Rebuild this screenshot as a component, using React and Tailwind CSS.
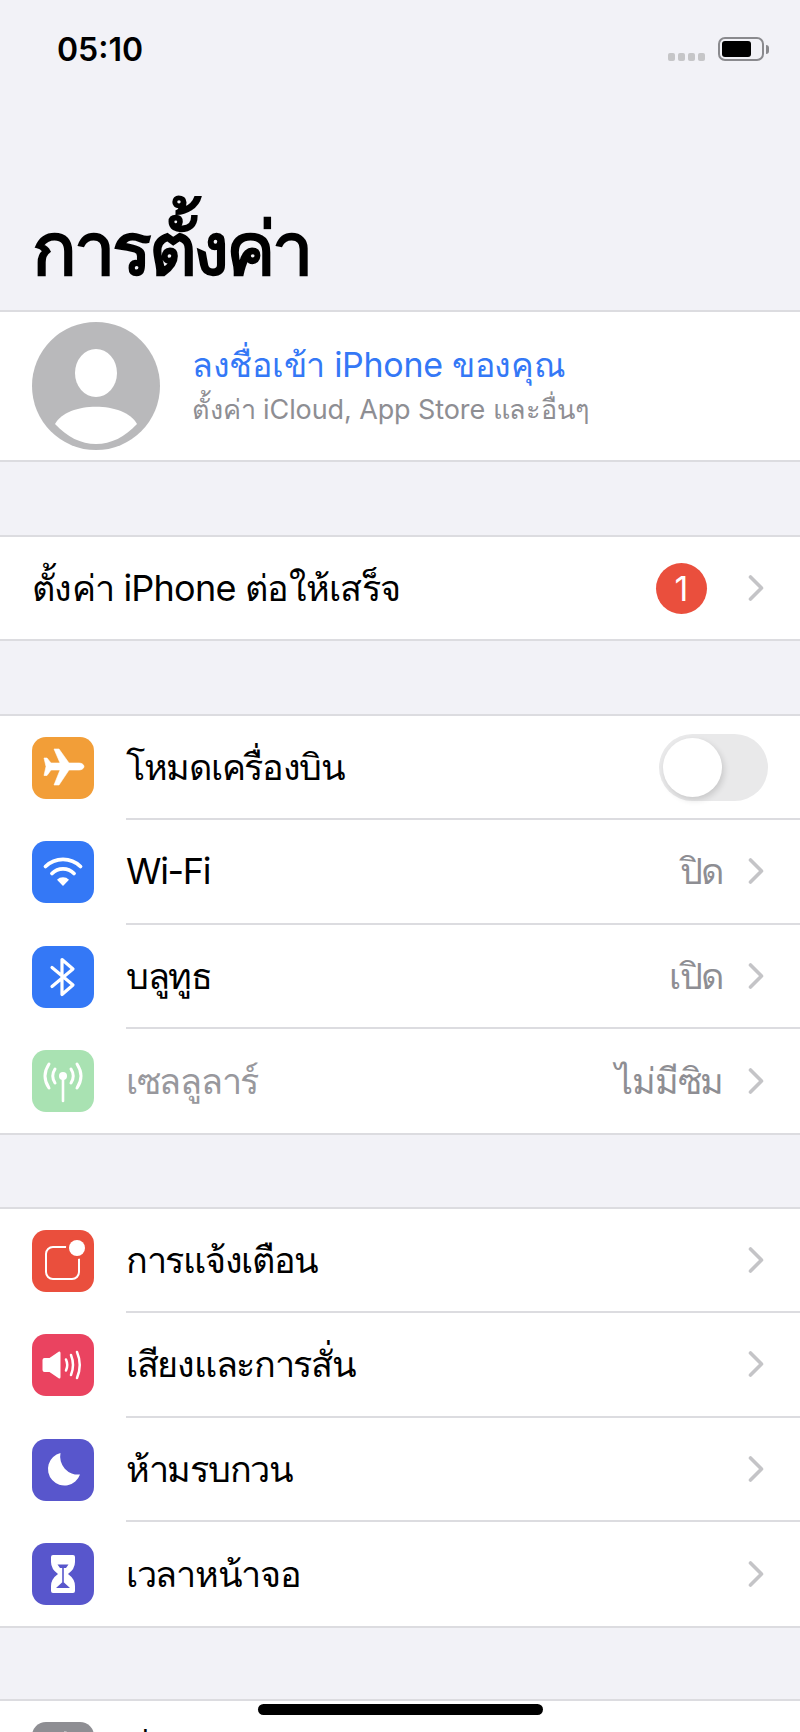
import React from 'react'

function Chevron() {
  return (
    <svg width="16" height="26" viewBox="0 0 16 26" className="shrink-0">
      <path d="M2.5 2 L13.5 13 L2.5 24" fill="none" stroke="#c4c4c7" strokeWidth="3.6" strokeLinecap="round" strokeLinejoin="round" />
    </svg>
  )
}

function Glyph({ children }) {
  return <svg width="62" height="62" viewBox="0 0 62 62">{children}</svg>
}

const icons = {
  plane: (
    <Glyph>
      <path fill="#fff" stroke="#fff" strokeWidth="0.6" strokeLinejoin="round" d="M52 29.500c0 2-2.500 3.500-5 3.500H37L27 48h-5l6-15h-9l-4 5.500h-3l2-9-2-8.500h3l4 5h9l-6-14h5l10 14h10c2.500 0 5 1.500 5 3.500z" />
    </Glyph>
  ),
  wifi: (
    <Glyph>
      <path d="M13.500 25.500A25 25 0 0 1 48.500 25.500" fill="none" stroke="#fff" strokeWidth="3.800" strokeLinecap="round" />
      <path d="M20 32.500A15.500 15.500 0 0 1 42 32.500" fill="none" stroke="#fff" strokeWidth="3.800" strokeLinecap="round" />
      <path d="M31 45L25 38.800A8.500 8.500 0 0 1 37 38.800Z" fill="#fff" />
    </Glyph>
  ),
  bluetooth: (
    <Glyph>
      <path d="M20 21.500L41 39L30 48.500V13.500L41 23L20 40.500" fill="none" stroke="#fff" strokeWidth="3.200" strokeLinecap="round" strokeLinejoin="round" />
    </Glyph>
  ),
  cellular: (
    <Glyph>
      <circle cx="31" cy="26" r="4" fill="#fff" />
      <path d="M31 28V51" stroke="#fff" strokeWidth="2.600" strokeLinecap="round" />
      <path d="M17 14Q9 26 17 38M45 14Q53 26 45 38M23 19Q18.500 26 23 33M39 19Q43.500 26 39 33" fill="none" stroke="#fff" strokeWidth="3" strokeLinecap="round" />
    </Glyph>
  ),
  notify: (
    <Glyph>
      <rect x="14" y="17" width="33" height="32" rx="7" fill="none" stroke="#fff" strokeWidth="2" />
      <circle cx="45" cy="18" r="11" fill="#ea4f3d" />
      <circle cx="45" cy="18" r="8" fill="#fff" />
    </Glyph>
  ),
  sound: (
    <Glyph>
      <path fill="#fff" d="M10.500 26q0-2 2-2h5L27 17.500q1.500-.5 1.500 1.500v24q0 2-1.500 1.500L17.500 38h-5q-2 0-2-2z" />
      <path d="M34 25.500Q36.500 31 34 36.500M39 21Q43 31 39 41M45 18Q50.500 31 45 44" fill="none" stroke="#fff" strokeWidth="2.500" strokeLinecap="round" />
    </Glyph>
  ),
  moon: (
    <Glyph>
      <path fill="#fff" d="M28.500 14A16.500 16.500 0 1 0 48 35.500A18 18 0 0 1 28.500 14Z" />
    </Glyph>
  ),
  hourglass: (
    <Glyph>
      <path fill="#fff" d="M21 12h20q2 0 2 2v5q0 7-7 12 7 5 7 12v5q0 2-2 2H21q-2 0-2-2v-5q0-7 7-12-7-5-7-12v-5q0-2 2-2z" />
      <path fill="#5856cc" d="M25.500 21.500h11l-2.500 3.500h-6zM30.200 25h1.600v15h-1.600zM30 39.500h2l6 5.500H24z" />
    </Glyph>
  ),
  gear: (
    <Glyph>
      <circle cx="31" cy="31" r="19" fill="none" stroke="#fff" strokeWidth="5" strokeDasharray="2.500 5" />
    </Glyph>
  ),
}

function Toggle() {
  return (
    <div className="flex h-[67px] w-[109px] items-center rounded-full bg-[#e9e9ea] pl-[4px]">
      <div className="h-[59px] w-[59px] rounded-full bg-white shadow-[2px_3px_6px_rgba(0,0,0,0.14)]" />
    </div>
  )
}

function SettingRow({ icon, color, label, value, dim, toggle, last }) {
  return (
    <div className="flex h-[104.250px] items-center pl-[32px]">
      <div className={`flex h-[62px] w-[62px] shrink-0 items-center justify-center rounded-[14px] ${color}`}>
        {icons[icon]}
      </div>
      <div className={`ml-[32px] flex h-full min-w-0 flex-1 items-center pr-[36px] tracking-[-1.3px] ${last ? '' : 'border-b-2 border-[#dcdce0]'}`}>
        <span className={`flex-1 text-[36px] ${dim ? 'text-[#98989d]' : 'text-black'}`}>{label}</span>
        {toggle && <div className="-mr-[4px]"><Toggle /></div>}
        {value && <span className="mr-[25px] text-[36px] text-[#8e8e93]">{value}</span>}
        {!toggle && <Chevron />}
      </div>
    </div>
  )
}

function Section({ children, className }) {
  return <div className={`border-y-2 border-[#dcdce0] bg-white ${className}`}>{children}</div>
}

export default function App() {
  return (
    <div className="relative h-[1732px] w-[800px] overflow-hidden bg-[#f2f2f7] font-['Inter','Noto_Sans',sans-serif]">
      {/* status bar + big title */}
      <div className="flex h-[310px] flex-col justify-between">
        <div className="flex items-start justify-between pl-[57px] pr-[31px] pt-[30px]">
          <span className="text-[32px] font-semibold leading-[40px] text-black">05:10</span>
          <div className="flex items-center pt-[7px]">
            <div className="mr-[13px] mt-[16px] flex gap-[3px]">
              <div className="h-[8px] w-[7px] rounded-[2px] bg-[#c6c6c8]" />
              <div className="h-[8px] w-[7px] rounded-[2px] bg-[#c6c6c8]" />
              <div className="h-[8px] w-[7px] rounded-[2px] bg-[#c6c6c8]" />
              <div className="h-[8px] w-[7px] rounded-[2px] bg-[#c6c6c8]" />
            </div>
            <div className="flex h-[24px] w-[46px] items-center rounded-[7px] border-2 border-[#8a8a8e] pl-[2px]">
              <div className="h-[16px] w-[29px] rounded-[3px] bg-black" />
            </div>
            <div className="ml-[2px] h-[9px] w-[3px] rounded-r-full bg-[#8a8a8e]" />
          </div>
        </div>
        <h1 className="pb-[17px] pl-[32px] text-[74px] font-bold leading-[90px] tracking-[-3.5px] text-black">การตั้งค่า</h1>
      </div>

      {/* profile */}
      <Section>
        <div className="flex h-[148px] items-center pl-[32px]">
          <svg width="128" height="128" viewBox="0 0 128 128" className="shrink-0">
            <circle cx="64" cy="64" r="64" fill="#b9b9bb" />
            <ellipse cx="64" cy="51" rx="21" ry="24" fill="#fff" />
            <path d="M23 102C35 79 93 79 105 102C93 115 79 122 64 122C49 122 35 115 23 102Z" fill="#fff" />
          </svg>
          <div className="ml-[32px]">
            <div className="text-[34px] leading-[48px] tracking-[-0.3px] text-[#3478f6]">ลงชื่อเข้า iPhone ของคุณ</div>
            <div className="text-[27px] leading-[42px] tracking-[-0.1px] text-[#8e8e93]">ตั้งค่า iCloud, App Store และอื่นๆ</div>
          </div>
        </div>
      </Section>

      {/* finish setup */}
      <Section className="mt-[73px]">
        <div className="flex h-[102px] items-center pl-[32px] pr-[36px]">
          <span className="flex-1 text-[36px] tracking-[-0.75px] text-black">ตั้งค่า iPhone ต่อให้เสร็จ</span>
          <div className="mr-[41px] flex h-[51px] w-[51px] items-center justify-center rounded-full bg-[#ea4f3d] text-[34px] text-white">1</div>
          <Chevron />
        </div>
      </Section>

      <Section className="mt-[73px]">
        <SettingRow icon="plane" color="bg-[#f29e38]" label="โหมดเครื่องบิน" toggle />
        <SettingRow icon="wifi" color="bg-[#3478f6]" label="Wi-Fi" value="ปิด" />
        <SettingRow icon="bluetooth" color="bg-[#3478f6]" label="บลูทูธ" value="เปิด" />
        <SettingRow icon="cellular" color="bg-[#a9e2b2]" label="เซลลูลาร์" value="ไม่มีซิม" dim last />
      </Section>

      <Section className="mt-[72px]">
        <SettingRow icon="notify" color="bg-[#ea4f3d]" label="การแจ้งเตือน" />
        <SettingRow icon="sound" color="bg-[#ea4360]" label="เสียงและการสั่น" />
        <SettingRow icon="moon" color="bg-[#5856cc]" label="ห้ามรบกวน" />
        <SettingRow icon="hourglass" color="bg-[#5856cc]" label="เวลาหน้าจอ" last />
      </Section>

      <Section className="mt-[71px]">
        <SettingRow icon="gear" color="bg-[#8e8e93]" label="ทั่วไป" last />
      </Section>

      {/* home indicator */}
      <div className="absolute bottom-[17px] left-[258px] h-[11px] w-[285px] rounded-full bg-black" />
    </div>
  )
}
